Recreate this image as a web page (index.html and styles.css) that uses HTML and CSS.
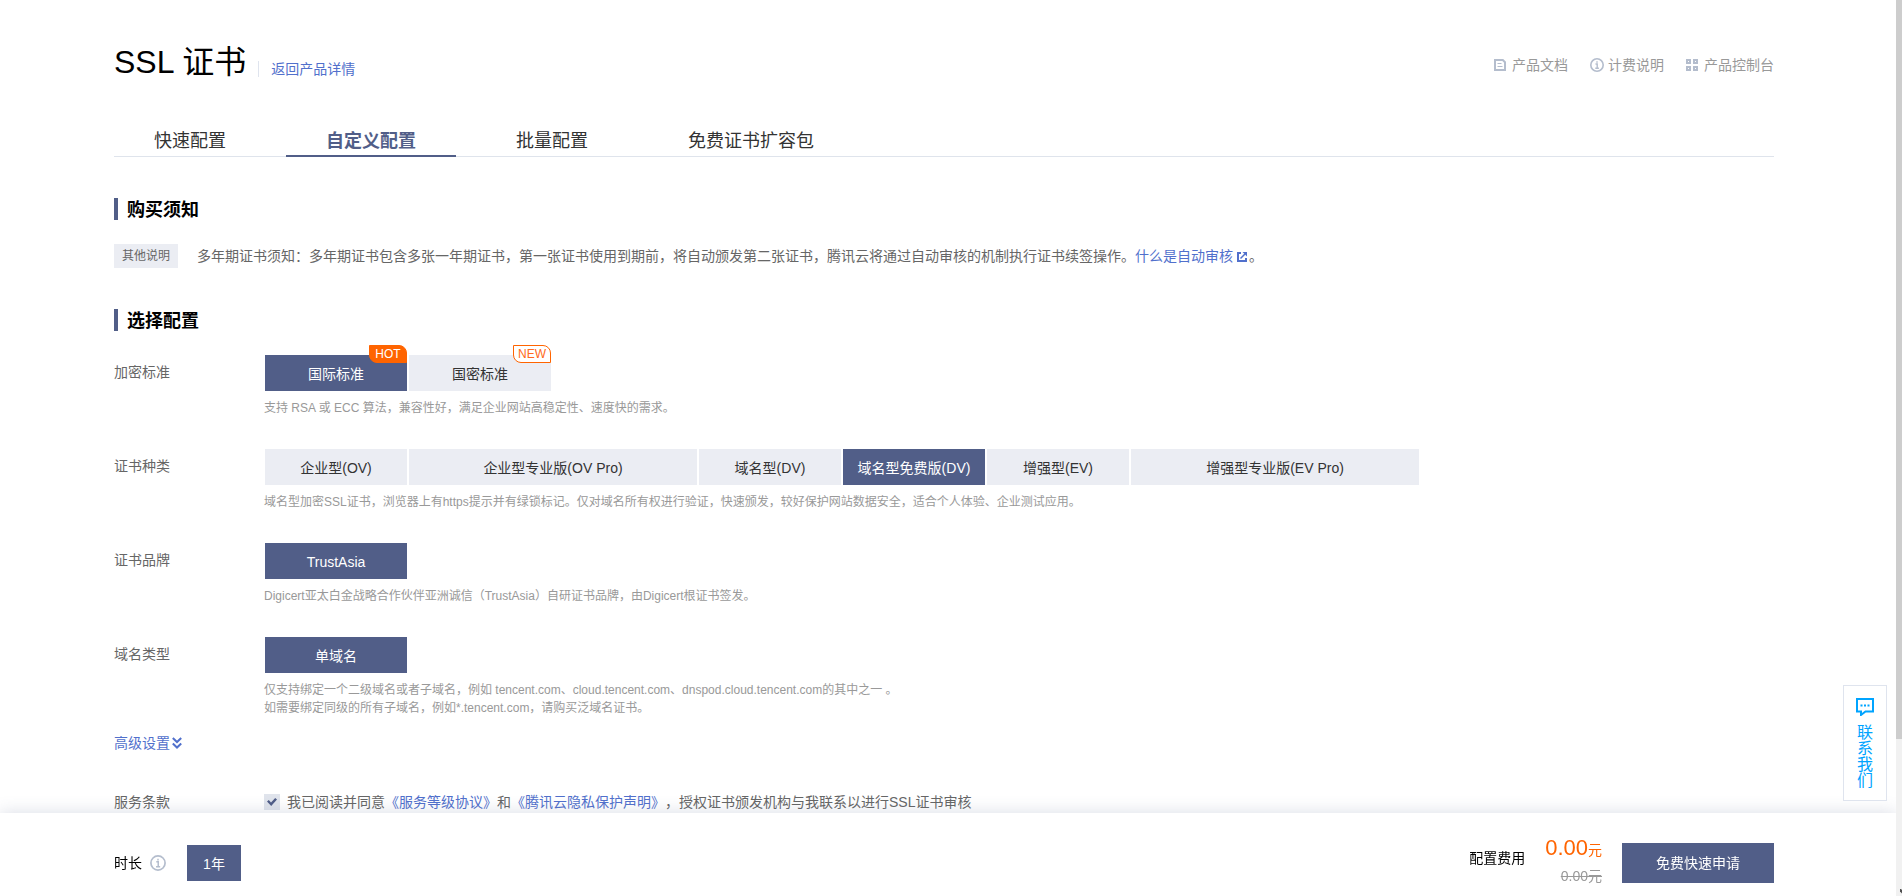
FILE: index.html
```html
<!DOCTYPE html>
<html lang="zh-CN">
<head>
<meta charset="utf-8">
<title>SSL 证书</title>
<link rel="stylesheet" href="styles.css">
</head>
<body>
<main class="page">
  <header class="header">
    <h1 class="title">SSL 证书</h1>
    <a class="back" href="#">返回产品详情</a>
    <nav class="quick">
      <a href="#"><svg width="14" height="14" viewBox="0 -1 14 14" fill="none" stroke="currentColor"><path d="M1 1h7.800L11 3.200V11H1z" stroke-width="2"/><path d="M3.500 4.500h4M3.500 7.500h5"/></svg>产品文档</a>
      <a href="#"><svg width="14" height="14" viewBox="0 0 14 14" fill="none" stroke="currentColor"><circle cx="7" cy="7" r="6.200" stroke-width="1.600"/><path d="M5.500 6h1.700v4M5.300 10.200h3.600M7 3.300v1.500" stroke-width="1.400"/></svg>计费说明</a>
      <a href="#"><svg width="14" height="14" viewBox="0 -1 14 14" fill="none" stroke="currentColor" stroke-width="2"><path d="M1 1h3v3H1zM8 1h3v3H8zM1 8h3v3H1zM8 8h3v3H8z"/></svg>产品控制台</a>
    </nav>
  </header>

  <nav class="tabs">
    <a class="tab" href="#">快速配置</a>
    <a class="tab active" href="#" aria-current="page">自定义配置</a>
    <a class="tab" href="#">批量配置</a>
    <a class="tab" href="#">免费证书扩容包</a>
  </nav>

  <section class="section">
    <h2 class="heading">购买须知</h2>
    <div class="notice">
      <span class="tag">其他说明</span>
      <p>多年期证书须知：多年期证书包含多张一年期证书，第一张证书使用到期前，将自动颁发第二张证书，腾讯云将通过自动审核的机制执行证书续签操作。<a href="#">什么是自动审核<svg class="ext" width="10" height="10" viewBox="0 0 10 10" fill="none" stroke="currentColor"><path d="M4 1H1v8h8V6" stroke-width="2"/><path d="M3.500 6.500L8 2" stroke-width="1.500"/><path d="M5.500 0H10v4.500z" fill="currentColor" stroke="none"/></svg></a>。</p>
    </div>
  </section>

  <section class="section">
    <h2 class="heading">选择配置</h2>
    <div class="rows">
      <div class="row" role="group" aria-labelledby="l1">
        <span class="label" id="l1">加密标准</span>
        <div class="field">
          <div class="options">
            <button type="button" class="option on" aria-pressed="true">国际标准<span class="badge hot">HOT</span></button>
            <button type="button" class="option">国密标准<span class="badge new">NEW</span></button>
          </div>
          <p class="help">支持 RSA 或 ECC 算法，兼容性好，满足企业网站高稳定性、速度快的需求。</p>
        </div>
      </div>
      <div class="row" role="group" aria-labelledby="l2">
        <span class="label" id="l2">证书种类</span>
        <div class="field">
          <div class="options">
            <button type="button" class="option">企业型(OV)</button>
            <button type="button" class="option wide">企业型专业版(OV Pro)</button>
            <button type="button" class="option">域名型(DV)</button>
            <button type="button" class="option on" aria-pressed="true">域名型免费版(DV)</button>
            <button type="button" class="option">增强型(EV)</button>
            <button type="button" class="option wide">增强型专业版(EV Pro)</button>
          </div>
          <p class="help">域名型加密SSL证书，浏览器上有https提示并有绿锁标记。仅对域名所有权进行验证，快速颁发，较好保护网站数据安全，适合个人体验、企业测试应用。</p>
        </div>
      </div>
      <div class="row" role="group" aria-labelledby="l3">
        <span class="label" id="l3">证书品牌</span>
        <div class="field">
          <div class="options"><button type="button" class="option on" aria-pressed="true">TrustAsia</button></div>
          <p class="help">Digicert亚太白金战略合作伙伴亚洲诚信（TrustAsia）自研证书品牌，由Digicert根证书签发。</p>
        </div>
      </div>
      <div class="row" role="group" aria-labelledby="l4">
        <span class="label" id="l4">域名类型</span>
        <div class="field">
          <div class="options"><button type="button" class="option on" aria-pressed="true">单域名</button></div>
          <p class="help">仅支持绑定一个二级域名或者子域名，例如 tencent.com、cloud.tencent.com、dnspod.cloud.tencent.com的其中之一 。<br>如需要绑定同级的所有子域名，例如*.tencent.com，请购买泛域名证书。</p>
        </div>
      </div>
    </div>
    <a class="advanced" href="#">高级设置<svg width="10" height="12" viewBox="0 0 10 12" fill="none" stroke="currentColor" stroke-width="2"><path d="M.8 1L5 5l4.200-4M.8 6.500l4.200 4 4.200-4"/></svg></a>
    <div class="terms">
      <span class="label">服务条款</span>
      <input class="check" type="checkbox" id="agree" checked>
      <label for="agree">我已阅读并同意<a href="#">《服务等级协议》</a>和<a href="#">《腾讯云隐私保护声明》</a>，授权证书颁发机构与我联系以进行SSL证书审核</label>
    </div>
  </section>
</main>

<footer class="bar">
  <span>时长</span>
  <svg class="info" width="16" height="16" viewBox="0 0 14 14" fill="none" stroke="currentColor"><circle cx="7" cy="7" r="6.200" stroke-width="1.500"/><path d="M5.500 6h1.700v4M5.300 10.200h3.600M7 3.300v1.500" stroke-width="1.300"/></svg>
  <button type="button" class="option on year" aria-pressed="true">1年</button>
  <span class="cost">配置费用</span>
  <div class="prices">
    <strong class="price">0.00<small>元</small></strong>
    <del class="old">0.00元</del>
  </div>
  <button type="button" class="apply">免费快速申请</button>
</footer>

<a class="contact" href="#">
  <svg width="18" height="18" viewBox="0 0 18 18"><path d="M1 1h16v12.500H9.500L5 17v-3.500H1z" fill="none" stroke="currentColor" stroke-width="2"/><path d="M4.500 6.500h2v2h-2zM8 6.500h2v2H8zM11.500 6.500h2v2h-2z" fill="currentColor"/></svg>
  <span>联系我们</span>
</a>

<div class="rail" aria-hidden="true"><div class="thumb"></div><svg width="6" height="17" viewBox="0 0 6 17"><path d="M4 10v2.500l2 2V11l-1-1z" fill="#505050"/></svg></div>
</body>
</html>
```
FILE: styles.css
```css
* { box-sizing: border-box; }

body {
  margin: 0;
  height: 100vh;
  overflow: hidden;
  background: #fff;
  color: #666;
  font: 14px/20px "Liberation Sans", "Noto Sans CJK SC", sans-serif;
  text-spacing-trim: space-all;
}

h1, h2, p { margin: 0; }
a { color: #5170cc; text-decoration: none; }
button { font: inherit; border: 0; padding: 0; cursor: pointer; }
svg { flex: none; }

.page { padding: 36px 128px 0 114px; }

.header { display: flex; align-items: center; height: 52px; }
.title { color: #000; font-size: 32px; line-height: 48px; font-weight: 400; }
.back {
  margin: 14px 0 0 12px;
  padding-left: 12px;
  border-left: 1px solid #dfe4ee;
  line-height: 16px;
}
.quick { display: flex; gap: 22px; margin: 6px 0 0 auto; }
.quick a { display: flex; align-items: center; gap: 4px; color: #999; }
.quick svg { color: #b4bdcd; }

.tabs {
  display: flex;
  gap: 20px;
  margin-top: 34px;
  border-bottom: 1px solid #dfe4ec;
}
.tab {
  padding: 6px 40px 0;
  margin-bottom: -1px;
  border-bottom: 2px solid transparent;
  color: #333;
  font-size: 18px;
  line-height: 27px;
}
.tab.active { border-color: #515e88; color: #515e88; font-weight: 700; }

.section { padding-top: 41px; }
.heading {
  padding: 2px 0 0 9px;
  border-left: 4px solid #515e88;
  color: #000;
  font-size: 18px;
  line-height: 20px;
  font-weight: 700;
}

.notice { display: flex; align-items: center; gap: 19px; margin-top: 24px; }
.tag {
  flex: none;
  width: 64px;
  background: #ebedf3;
  font-size: 12px;
  line-height: 24px;
  text-align: center;
}
.ext { margin: 0 2px 0 4px; vertical-align: -1px; }

.rows { display: grid; gap: 32px; margin-top: 24px; }
.row { display: flex; }
.label { flex: none; width: 150px; }
.row .label { padding-top: 7px; }
.options { display: flex; gap: 2px; padding-left: 1px; }
.option {
  position: relative;
  width: 142px;
  height: 36px;
  padding-top: 2px;
  background: #ebedf3;
  color: #333;
}
.option.wide { width: 288px; }
.option.on { background: #515e88; color: #fff; }
.help { margin-top: 8px; color: #999; font-size: 12px; line-height: 18px; }

.badge {
  position: absolute;
  top: -10px;
  right: 0;
  width: 38px;
  height: 18px;
  border: 1px solid #ff6400;
  border-radius: 0 8px 0 8px;
  font-size: 12px;
  line-height: 16px;
}
.badge.hot { background: #ff6400; color: #fff; }
.badge.new { background: #fff; color: #ff6a20; }

.advanced { display: inline-flex; align-items: center; gap: 2px; margin-top: 16px; }

.terms { display: flex; align-items: center; margin-top: 39px; }
.check {
  appearance: none;
  display: grid;
  place-items: center;
  width: 16px;
  height: 16px;
  margin: 0 7px 0 0;
  background: #e0e4ec;
}
.check:checked::before {
  content: "";
  width: 10px;
  height: 8px;
  background: #515e88;
  clip-path: polygon(0 45%, 18% 25%, 40% 55%, 82% 0, 100% 20%, 42% 100%);
}

.bar {
  position: fixed;
  left: 0;
  right: 6px;
  bottom: 0;
  display: flex;
  align-items: center;
  height: 83px;
  padding: 16px 122px 0 114px;
  background: #fff;
  box-shadow: 0 0 16px rgba(81, 94, 136, .22);
  color: #000;
}
.info { margin: 0 21px 0 8px; color: #b4bdcd; }
.bar .year { width: 54px; }
.cost { margin: 0 20px 10px auto; }
.prices { display: grid; gap: 2px; justify-items: end; margin-bottom: 6px; }
.price { color: #ff6400; font-size: 22px; line-height: 28px; font-weight: 400; }
.price small { font-size: 14px; }
.old { color: #999; }
.apply {
  width: 152px;
  height: 40px;
  margin-left: 20px;
  background: #515e88;
  color: #fff;
}

.contact {
  position: fixed;
  right: 15px;
  bottom: 95px;
  display: flex;
  flex-direction: column;
  align-items: center;
  gap: 9px;
  width: 44px;
  padding: 12px 0 11px;
  border: 1px solid #dfe4ee;
  background: #fff;
  color: #00a4ff;
  font-size: 16px;
  line-height: 16px;
}
.contact span { width: 16px; }

.rail {
  position: fixed;
  top: 0;
  right: 0;
  bottom: 0;
  display: flex;
  flex-direction: column;
  justify-content: space-between;
  width: 6px;
  background: #f1f1f1;
}
.thumb { height: 82.5%; background: #cdcdcd; }
```
